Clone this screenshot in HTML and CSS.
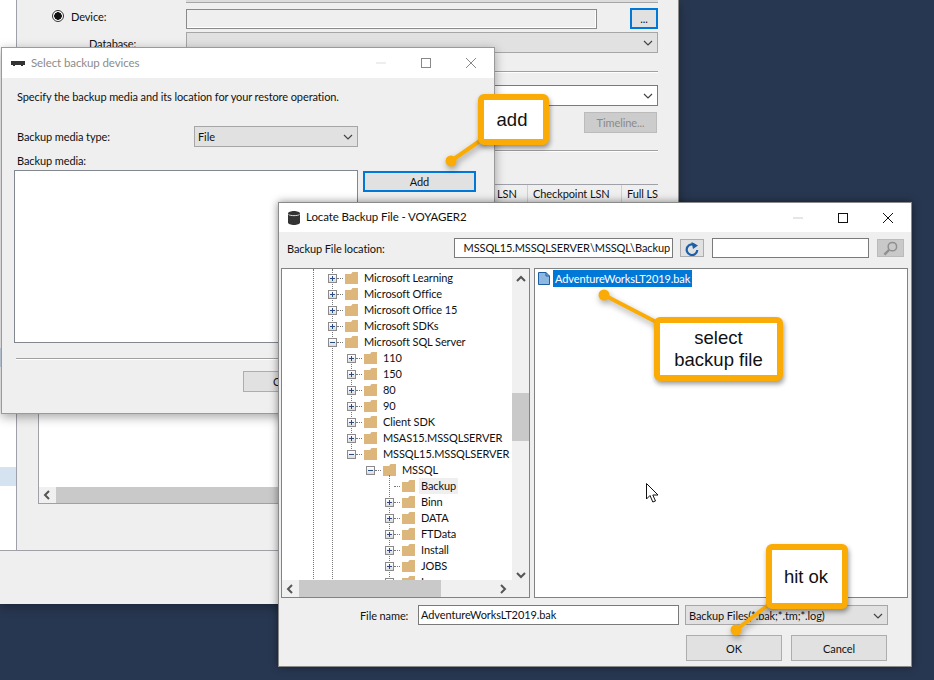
FILE: index.html
```html
<!DOCTYPE html>
<html lang="en">
<head>
    <meta charset="UTF-8">
    <title>Locate Backup File</title>
    <link rel="stylesheet" href="styles.css">
</head>
<body>
    <svg class="defs" width="0" height="0">
        <symbol id="folder" viewBox="0 0 13 12">
            <path d="M0 2H6L7.5 0H13V12H0Z" fill="#dcb67a"/>
        </symbol>
    </svg>

    <div class="desktop">

        <!-- restore database dialog, mostly hidden -->
        <div class="window back-window">
            <div class="back-body">
                <div class="side">
                    <div class="side-sel first"></div>
                    <div class="side-sel second"></div>
                </div>
                <div class="back-main">
                    <div class="strip"></div>
                    <div class="row device-row">
                        <span class="radio"></span>
                        <span class="device-label">Device:</span>
                        <div class="field device-field"></div>
                        <button class="btn browse">...</button>
                    </div>
                    <div class="row db-row">
                        <span class="db-label">Database:</span>
                        <div class="combo db-combo"><svg class="chev" viewBox="0 0 10 6"><path d="M1 1L5 5L9 1" fill="none" stroke="#444" stroke-width="1.2"/></svg></div>
                    </div>
                    <div class="rule first-rule"></div>
                    <div class="combo white-combo"><svg class="chev" viewBox="0 0 10 6"><path d="M1 1L5 5L9 1" fill="none" stroke="#444" stroke-width="1.2"/></svg></div>
                    <div class="timeline-wrap"><button class="btn timeline">Timeline...</button></div>
                    <div class="rule second-rule"></div>
                    <div class="grid-box">
                        <div class="grid-head">
                            <span class="col col-lsn">LSN</span>
                            <span class="col col-check">Checkpoint LSN</span>
                            <span class="col col-full">Full LS</span>
                        </div>
                        <div class="grid-rows"></div>
                        <div class="hscroll grid-scroll">
                            <svg class="arrow" viewBox="0 0 8 10"><path d="M6 1L2 5L6 9" fill="none" stroke="#555" stroke-width="2"/></svg>
                            <div class="hthumb"></div>
                        </div>
                    </div>
                </div>
            </div>
        </div>

        <!-- select backup devices -->
        <div class="window select-window">
            <div class="titlebar">
                <svg class="tape" viewBox="0 0 14 7"><path d="M0 1H14V5H12V6H10V5H4V6H2V5H0Z" fill="#333"/></svg>
                <span class="title faded">Select backup devices</span>
                <div class="controls faded-controls">
                    <svg viewBox="0 0 10 10"><path d="M0 5H10" stroke="#ddd"/></svg>
                    <svg viewBox="0 0 10 10"><rect x=".5" y=".5" width="9" height="9" fill="none" stroke="#888"/></svg>
                    <svg viewBox="0 0 10 10"><path d="M0 0L10 10M10 0L0 10" stroke="#888"/></svg>
                </div>
            </div>
            <div class="select-body">
                <p class="intro">Specify the backup media and its location for your restore operation.</p>
                <div class="row media-type">
                    <span class="media-label">Backup media type:</span>
                    <div class="combo type-combo">File<svg class="chev" viewBox="0 0 10 6"><path d="M1 1L5 5L9 1" fill="none" stroke="#444" stroke-width="1.2"/></svg></div>
                </div>
                <div class="media-title">Backup media:</div>
                <div class="row media-row">
                    <div class="media-list"></div>
                    <button class="btn add-btn">Add</button>
                </div>
                <div class="rule select-rule"></div>
                <button class="btn select-ok">OK</button>
            </div>
        </div>

        <!-- locate backup file -->
        <div class="window locate-window">
            <div class="titlebar">
                <svg class="db-icon" viewBox="0 0 12 14"><path d="M0 2.5C0 1 3 0 6 0S12 1 12 2.5V11.500C12 13 9 14 6 14S0 13 0 11.500Z" fill="#333"/><path d="M.5 3.500C2 5 10 5 11.500 3.500" fill="none" stroke="#ddd"/></svg>
                <span class="title">Locate Backup File - VOYAGER2</span>
                <div class="controls">
                    <svg viewBox="0 0 10 10"><path d="M0 5H10" stroke="#ccc"/></svg>
                    <svg viewBox="0 0 10 10"><rect x=".5" y=".5" width="9" height="9" fill="none" stroke="#111"/></svg>
                    <svg viewBox="0 0 10 10"><path d="M0 0L10 10M10 0L0 10" stroke="#111"/></svg>
                </div>
            </div>
            <div class="locate-body">
                <div class="row toolbar">
                    <span class="location-label">Backup File location:</span>
                    <div class="field location"><span>MSSQL15.MSSQLSERVER\MSSQL\Backup</span></div>
                    <button class="btn refresh">
                        <svg viewBox="0 0 14 14"><path d="M10.800 4A5.300 5.300 0 1 0 12.300 8" fill="none" stroke="#1b5fa8" stroke-width="2.200"/><path d="M6.500 0L13 3.500L8 7Z" fill="#1b5fa8"/></svg>
                    </button>
                    <div class="field search"></div>
                    <button class="btn find">
                        <svg viewBox="0 0 16 16"><circle cx="10" cy="6" r="4.500" fill="none" stroke="#8f8f8f" stroke-width="1.600"/><path d="M6.500 9.500L1.500 14.500" stroke="#8f8f8f" stroke-width="2.500"/></svg>
                    </button>
                </div>
                <div class="row panes">
                    <div class="tree">
                        <div class="guide guide-a"></div>
                        <div class="guide guide-b"></div>
                        <div class="guide guide-c"></div>
                        <div class="guide guide-d"></div>
                        <div class="tree-rows">
                            <div class="node lvl-a"><span class="box plus"></span><span class="dots"></span><svg class="fold"><use href="#folder"/></svg><span class="name">Microsoft Learning</span></div>
                            <div class="node lvl-a"><span class="box plus"></span><span class="dots"></span><svg class="fold"><use href="#folder"/></svg><span class="name">Microsoft Office</span></div>
                            <div class="node lvl-a"><span class="box plus"></span><span class="dots"></span><svg class="fold"><use href="#folder"/></svg><span class="name">Microsoft Office 15</span></div>
                            <div class="node lvl-a"><span class="box plus"></span><span class="dots"></span><svg class="fold"><use href="#folder"/></svg><span class="name">Microsoft SDKs</span></div>
                            <div class="node lvl-a"><span class="box"></span><span class="dots"></span><svg class="fold"><use href="#folder"/></svg><span class="name">Microsoft SQL Server</span></div>
                            <div class="node lvl-b"><span class="box plus"></span><span class="dots"></span><svg class="fold"><use href="#folder"/></svg><span class="name">110</span></div>
                            <div class="node lvl-b"><span class="box plus"></span><span class="dots"></span><svg class="fold"><use href="#folder"/></svg><span class="name">150</span></div>
                            <div class="node lvl-b"><span class="box plus"></span><span class="dots"></span><svg class="fold"><use href="#folder"/></svg><span class="name">80</span></div>
                            <div class="node lvl-b"><span class="box plus"></span><span class="dots"></span><svg class="fold"><use href="#folder"/></svg><span class="name">90</span></div>
                            <div class="node lvl-b"><span class="box plus"></span><span class="dots"></span><svg class="fold"><use href="#folder"/></svg><span class="name">Client SDK</span></div>
                            <div class="node lvl-b"><span class="box plus"></span><span class="dots"></span><svg class="fold"><use href="#folder"/></svg><span class="name">MSAS15.MSSQLSERVER</span></div>
                            <div class="node lvl-b"><span class="box"></span><span class="dots"></span><svg class="fold"><use href="#folder"/></svg><span class="name">MSSQL15.MSSQLSERVER</span></div>
                            <div class="node lvl-c"><span class="box"></span><span class="dots"></span><svg class="fold"><use href="#folder"/></svg><span class="name">MSSQL</span></div>
                            <div class="node lvl-d"><span class="box none"></span><span class="dots"></span><svg class="fold"><use href="#folder"/></svg><span class="name current">Backup</span></div>
                            <div class="node lvl-d"><span class="box plus"></span><span class="dots"></span><svg class="fold"><use href="#folder"/></svg><span class="name">Binn</span></div>
                            <div class="node lvl-d"><span class="box plus"></span><span class="dots"></span><svg class="fold"><use href="#folder"/></svg><span class="name">DATA</span></div>
                            <div class="node lvl-d"><span class="box plus"></span><span class="dots"></span><svg class="fold"><use href="#folder"/></svg><span class="name">FTData</span></div>
                            <div class="node lvl-d"><span class="box plus"></span><span class="dots"></span><svg class="fold"><use href="#folder"/></svg><span class="name">Install</span></div>
                            <div class="node lvl-d"><span class="box plus"></span><span class="dots"></span><svg class="fold"><use href="#folder"/></svg><span class="name">JOBS</span></div>
                            <div class="node lvl-d"><span class="box plus"></span><span class="dots"></span><svg class="fold"><use href="#folder"/></svg><span class="name">Log</span></div>
                        </div>
                        <div class="vscroll">
                            <svg class="varrow" viewBox="0 0 10 8"><path d="M1 6L5 2L9 6" fill="none" stroke="#555" stroke-width="2"/></svg>
                            <div class="vthumb"></div>
                            <svg class="varrow" viewBox="0 0 10 8"><path d="M1 2L5 6L9 2" fill="none" stroke="#555" stroke-width="2"/></svg>
                        </div>
                        <div class="hscroll tree-scroll">
                            <svg class="arrow" viewBox="0 0 8 10"><path d="M6 1L2 5L6 9" fill="none" stroke="#555" stroke-width="2"/></svg>
                            <div class="tree-thumb"></div>
                            <svg class="arrow right-arrow" viewBox="0 0 8 10"><path d="M2 1L6 5L2 9" fill="none" stroke="#555" stroke-width="2"/></svg>
                        </div>
                    </div>
                    <div class="files">
                        <div class="file">
                            <svg class="doc" viewBox="0 0 12 13"><path d="M.5.500H8L11.500 4V12.500H.5Z" fill="#8db8e2" stroke="#1f5f9f"/><path d="M8 .5V4H11.500" fill="none" stroke="#1f5f9f"/></svg>
                            <span class="file-name">AdventureWorksLT2019.bak</span>
                        </div>
                    </div>
                </div>
                <div class="row file-row">
                    <span class="file-label">File name:</span>
                    <div class="field name-field">AdventureWorksLT2019.bak</div>
                    <div class="combo filter">Backup Files(*.bak;*.tm;*.log)<svg class="chev" viewBox="0 0 10 6"><path d="M1 1L5 5L9 1" fill="none" stroke="#444" stroke-width="1.2"/></svg></div>
                </div>
                <div class="row actions">
                    <button class="btn action">OK</button>
                    <button class="btn action">Cancel</button>
                </div>
            </div>
        </div>

        <svg class="pointer" viewBox="0 0 13 20"><path d="M.5.500V16L4 12.500L6.800 19L9.500 18L6.800 12H12Z" fill="#fff" stroke="#111"/></svg>

        <!-- annotation leaders -->
        <svg class="leaders" viewBox="0 0 934 680">
            <g stroke="#fbab05" fill="#fbab05" stroke-width="4">
                <path d="M451 161L484 138"/><circle cx="451" cy="161" r="5.500" stroke="none"/>
                <path d="M604 295L660 324"/><circle cx="604" cy="295" r="5.500" stroke="none"/>
                <path d="M736 630L772 602"/><circle cx="736" cy="630" r="5.500" stroke="none"/>
            </g>
        </svg>
        <div class="callout add-note">add</div>
        <div class="callout select-note">select<br>backup file</div>
        <div class="callout ok-note">hit ok</div>
    </div>
</body>
</html>
```

FILE: styles.css
```css
* {
    box-sizing: border-box;
}

html, body {
    margin: 0;
    height: 100%;
}

body {
    background-color: #283751;
    font-family: Lato, "Noto Sans", sans-serif;
    font-size: 11px;
    letter-spacing: -0.1px;
    color: #111;
    overflow: hidden;
}

.defs {
    position: absolute;
}

.desktop {
    position: relative;
    width: 934px;
    height: 680px;
    overflow: hidden;
}

.window {
    position: absolute;
    background-color: #efefef;
    box-shadow: 0 3px 10px rgba(0, 0, 0, 0.35);
}

.row {
    display: flex;
    align-items: center;
}

.btn {
    display: block;
    margin: 0;
    padding: 0;
    background-color: #e1e1e1;
    border: 1px solid #adadad;
    font-family: inherit;
    font-size: 11px;
    letter-spacing: inherit;
    color: #111;
}

.field {
    background-color: #fff;
    border: 1px solid #7a7a7a;
    height: 20px;
}

.combo {
    position: relative;
    background-color: #e1e1e1;
    border: 1px solid #a6a6a6;
    line-height: 19px;
    padding-left: 3px;
}

.chev {
    position: absolute;
    right: 4px;
    top: 7px;
    width: 10px;
    height: 6px;
}

.rule {
    height: 2px;
    border-top: 1px solid #a0a0a0;
    border-bottom: 1px solid #fff;
}

/* back window */
.back-window {
    left: 0;
    top: 0;
    width: 679px;
    height: 604px;
    border-right: 1px solid #8a8a8a;
}

.back-body {
    display: flex;
    height: 551px;
    border-bottom: 1px solid #a0a0a8;
}

.side {
    width: 17px;
    background-color: #fff;
    border-right: 1px solid #a0a0a8;
}

.side-sel {
    height: 19px;
    background-color: #d5e3f0;
}

.side-sel.first {
    margin-top: 348px;
}

.side-sel.second {
    margin-top: 100px;
}

.back-main {
    width: 641px;
}

.strip {
    height: 3px;
    margin-left: 169px;
    background-color: #dcdcdc;
    border-bottom: 1px solid #a6a6a6;
}

.device-row {
    height: 21px;
    margin-top: 5px;
}

.radio {
    width: 12px;
    height: 12px;
    margin: 0 0 6px 35px;
    border: 1px solid #333;
    border-radius: 50%;
    background: radial-gradient(circle, #111 3.5px, #fff 4px);
}

.device-label {
    width: 115px;
    margin: 0 0 5px 7px;
}

.device-field {
    width: 411px;
    height: 20px;
    background-color: #efefef;
    border-color: #8a8a8a;
    box-shadow: inset -1px -1px 0 #fff;
}

.browse {
    width: 28px;
    height: 21px;
    margin-left: 33px;
    border: 2px solid #0078d7;
    line-height: 12px;
}

.db-row {
    height: 21px;
    margin-top: 3px;
}

.db-label {
    width: 97px;
    margin: 2px 0 0 72px;
}

.db-combo {
    width: 472px;
    height: 21px;
}

.first-rule {
    margin: 18px 0 0 169px;
}

.white-combo {
    height: 21px;
    margin: 12px 0 0 169px;
    background-color: #fff;
    border-color: #7a7a7a;
}

.timeline-wrap {
    display: flex;
    justify-content: flex-end;
    margin-top: 6px;
    padding-right: 1px;
}

.timeline {
    width: 73px;
    height: 21px;
    background-color: #ccc;
    border-color: #bbb;
    color: #8a8a8a;
}

.second-rule {
    margin: 17px 0 0 169px;
}

.grid-box {
    width: 620px;
    height: 320px;
    margin: 32px 0 0 21px;
    border: 1px solid #a0a0a8;
    border-right: 0;
    overflow: hidden;
}

.grid-head {
    display: flex;
    height: 18px;
    line-height: 17px;
    border-bottom: 1px solid #d8d8d8;
}

.col {
    flex: none;
    border-right: 1px solid #d0d0d0;
    white-space: nowrap;
    overflow: hidden;
}

.col-lsn {
    width: 489px;
    padding-left: 458px;
}

.col-check {
    width: 94px;
    padding-left: 5px;
}

.col-full {
    width: 36px;
    padding-left: 5px;
    border-right: 0;
}

.grid-rows {
    height: 284px;
    background-color: #fff;
}

.hscroll {
    position: relative;
    display: flex;
    align-items: center;
    height: 16px;
    background-color: #f0f0f0;
}

.arrow {
    flex: none;
    width: 8px;
    height: 10px;
    margin: 0 5px 0 4px;
}

.hthumb {
    width: 450px;
    height: 16px;
    background-color: #c9c9c9;
}

/* select backup devices */
.select-window {
    left: 1px;
    top: 47px;
    width: 494px;
    height: 367px;
    border: 1px solid #9a9a9a;
}

.titlebar {
    display: flex;
    align-items: center;
    background-color: #fff;
}

.select-window .titlebar {
    height: 30px;
}

.tape {
    width: 14px;
    height: 7px;
    margin-left: 9px;
}

.title {
    margin: 0 0 2px 6px;
    font-size: 11.5px;
}

.title.faded {
    color: #8c8c8c;
}

.controls {
    display: flex;
    align-items: center;
    gap: 35px;
    margin-left: auto;
    padding-right: 18px;
}

.controls svg {
    width: 10px;
    height: 10px;
}

.select-body {
    padding-left: 15px;
}

.intro {
    margin: 11px 0 0;
    line-height: 16px;
}

.media-type {
    height: 21px;
    margin-top: 21px;
}

.media-label {
    width: 177px;
}

.type-combo {
    width: 164px;
    height: 21px;
}

.media-title {
    margin-top: 6px;
    line-height: 16px;
}

.media-row {
    align-items: flex-start;
    margin: 1px 0 0 -3px;
}

.media-list {
    width: 344px;
    height: 173px;
    background-color: #fff;
    border: 1px solid #828790;
}

.add-btn {
    width: 113px;
    height: 21px;
    margin: 1px 0 0 5px;
    border: 2px solid #0078d7;
}

.select-rule {
    margin: 15px 14px 0 -1px;
}

.select-ok {
    width: 76px;
    height: 21px;
    margin: 11px 0 0 226px;
}

/* locate backup file */
.locate-window {
    left: 278px;
    top: 202px;
    width: 634px;
    height: 465px;
    border: 1px solid #8a8a8a;
    box-shadow: 0 0 8px rgba(0, 0, 0, 0.45);
}

.locate-window .titlebar {
    height: 29px;
}

.db-icon {
    width: 12px;
    height: 14px;
    margin-left: 9px;
}

.locate-body {
    height: 434px;
}

.toolbar {
    padding-left: 8px;
    padding-top: 6px;
}

.location-label {
    width: 167px;
}

.location {
    display: flex;
    justify-content: flex-end;
    width: 219px;
    padding-right: 2px;
    overflow: hidden;
    white-space: nowrap;
    line-height: 17px;
}

.location span {
    flex: none;
}

.refresh {
    width: 24px;
    height: 18px;
    margin-left: 7px;
}

.refresh svg {
    display: block;
    width: 14px;
    height: 14px;
    margin: 1px auto 0;
}

.search {
    width: 157px;
    margin-left: 8px;
}

.find {
    width: 27px;
    height: 18px;
    margin-left: 8px;
    background-color: #c9c9c9;
    border-color: #bbb;
}

.find svg {
    display: block;
    width: 15px;
    height: 15px;
    margin: 0 auto;
}

.panes {
    align-items: stretch;
    height: 330px;
    margin-top: 10px;
    padding-left: 2px;
}

.tree {
    position: relative;
    width: 249px;
    background-color: #fff;
    border: 1px solid #828282;
    overflow: hidden;
}

.tree-rows {
    padding-top: 1px;
    height: 311px;
    overflow: hidden;
}

.node {
    display: flex;
    align-items: center;
    height: 16px;
}

.lvl-a {
    margin-left: 46px;
}

.lvl-b {
    margin-left: 65px;
}

.lvl-c {
    margin-left: 84px;
}

.lvl-d {
    margin-left: 103px;
}

.box {
    position: relative;
    flex: none;
    width: 9px;
    height: 9px;
    background: linear-gradient(#fff, #dcdcdc);
    border: 1px solid #8a8a8a;
}

.box.none {
    background: none;
    border: 0;
}

.box::before {
    content: "";
    position: absolute;
    left: 1px;
    top: 3px;
    width: 5px;
    height: 1px;
    background-color: #2e4a86;
}

.box.none::before {
    display: none;
}

.box.plus::after {
    content: "";
    position: absolute;
    left: 3px;
    top: 1px;
    width: 1px;
    height: 5px;
    background-color: #2e4a86;
}

.dots {
    flex: none;
    width: 6px;
    margin: 0 2px 0 0;
    border-top: 1px dotted #777;
}

.fold {
    flex: none;
    width: 13px;
    height: 12px;
    margin-right: 4px;
}

.name {
    padding: 0 2px;
    line-height: 16px;
    white-space: nowrap;
}

.name.current {
    background-color: #efefef;
}

.guide {
    position: absolute;
    border-left: 1px dotted #777;
}

.guide-a {
    left: 31px;
    top: 0;
    height: 312px;
}

.guide-b {
    left: 50px;
    top: 0;
    height: 312px;
}

.guide-c {
    left: 69px;
    top: 86px;
    height: 104px;
}

.guide-d {
    left: 107px;
    top: 206px;
    height: 106px;
}

.vscroll {
    position: absolute;
    right: 0;
    top: 0;
    width: 17px;
    height: 312px;
    background-color: #f0f0f0;
}

.varrow {
    display: block;
    width: 10px;
    height: 8px;
    margin: 6px auto 0;
}

.vthumb {
    height: 48px;
    margin-top: 110px;
    background-color: #c9c9c9;
}

.vthumb + .varrow {
    margin-top: 130px;
}

.tree-scroll {
    position: absolute;
    left: 0;
    bottom: 0;
    width: 247px;
    height: 17px;
}

.tree-thumb {
    width: 142px;
    height: 17px;
    background-color: #c9c9c9;
}

.right-arrow {
    margin-left: auto;
    margin-right: 22px;
}

.files {
    width: 374px;
    margin-left: 4px;
    padding: 1px 0 0 3px;
    background-color: #fff;
    border: 1px solid #828282;
}

.file {
    display: flex;
    align-items: center;
}

.doc {
    width: 12px;
    height: 13px;
    margin-right: 3px;
}

.file-name {
    padding: 0 2px;
    line-height: 17px;
    background-color: #0078d7;
    color: #fff;
}

.file-row {
    margin-top: 7px;
    padding-left: 81px;
}

.file-label {
    width: 58px;
}

.name-field {
    width: 261px;
    padding-left: 2px;
    line-height: 17px;
}

.filter {
    width: 203px;
    height: 20px;
    margin-left: 6px;
}

.actions {
    gap: 9px;
    margin-top: 10px;
    padding-left: 407px;
}

.action {
    width: 96px;
    height: 26px;
}

/* overlays */
.pointer {
    position: absolute;
    left: 646px;
    top: 483px;
    width: 13px;
    height: 20px;
}

.leaders {
    position: absolute;
    left: 0;
    top: 0;
    width: 934px;
    height: 680px;
    filter: drop-shadow(1px 3px 3px rgba(0, 0, 0, 0.35));
}

.callout {
    position: absolute;
    display: flex;
    align-items: center;
    justify-content: center;
    background-color: #fff;
    border: 6px solid #fbab05;
    border-radius: 6px;
    box-shadow: 1px 3px 5px rgba(0, 0, 0, 0.4);
    font-family: "Liberation Sans", Arial, sans-serif;
    font-size: 18.5px;
    letter-spacing: 0;
    line-height: 22px;
    text-align: center;
}

.add-note {
    left: 478px;
    top: 94px;
    width: 71px;
    height: 51px;
    padding-right: 3px;
}

.select-note {
    left: 654px;
    top: 317px;
    width: 129px;
    height: 64px;
}

.ok-note {
    left: 766px;
    top: 544px;
    width: 82px;
    height: 65px;
    padding-right: 2px;
}
```
